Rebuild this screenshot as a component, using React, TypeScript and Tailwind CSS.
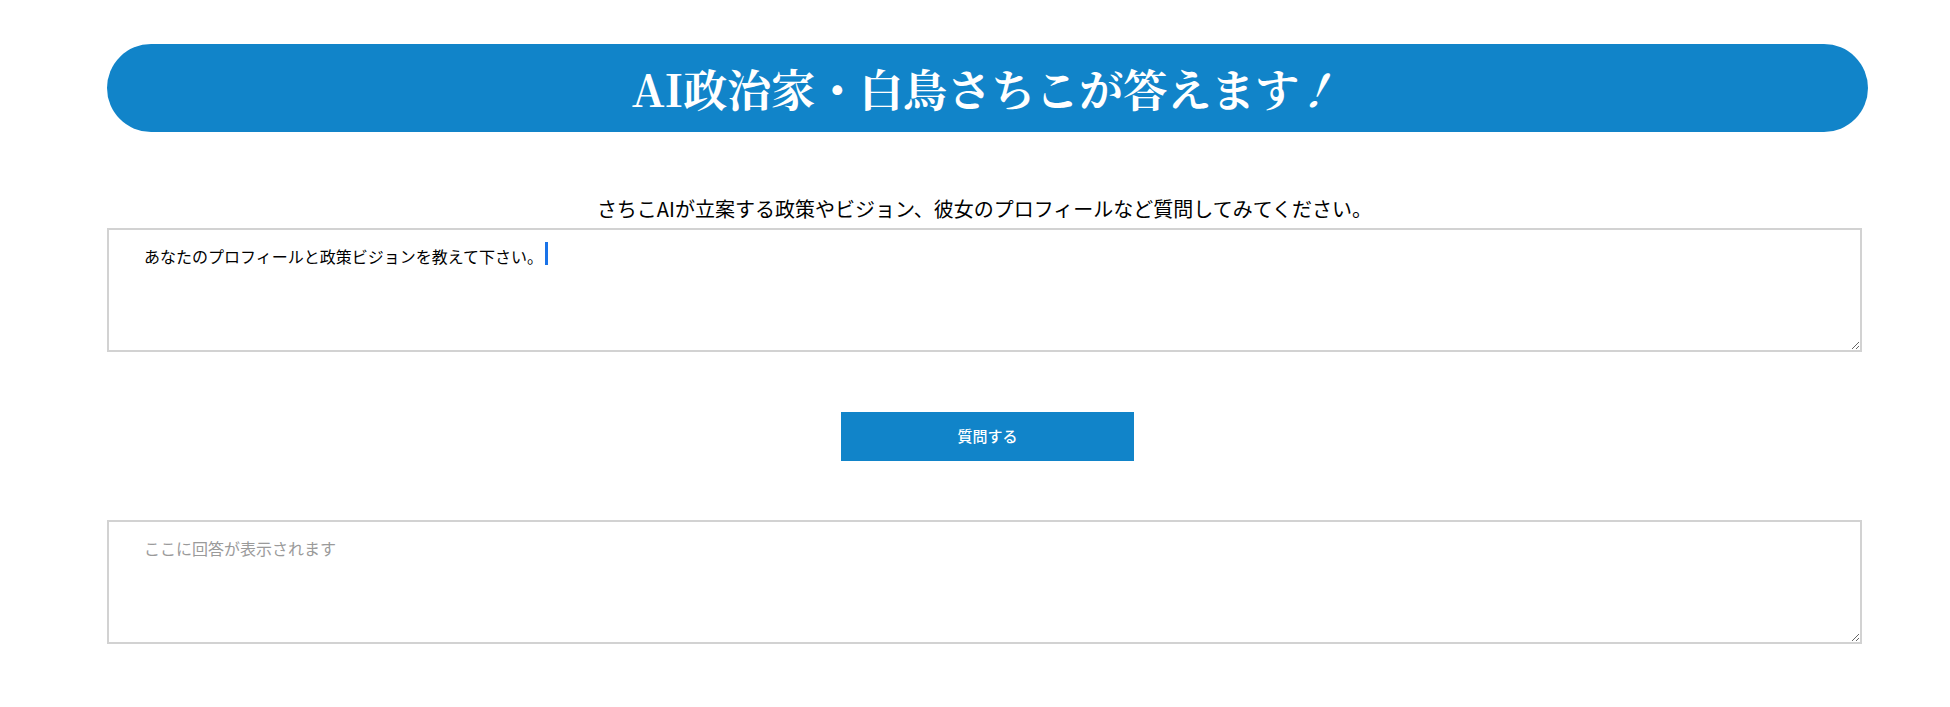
const App = () => {
  const jp = { fontFamily: '"Noto Sans CJK JP", "Noto Sans", sans-serif' };

  return (
    <div className="min-h-[707px] bg-white pl-[107px] pt-[44px]" style={jp}>
      <div className="flex h-[88px] w-[1761px] items-center justify-center rounded-full bg-[#1184c9]">
        <h1
          className="text-[44px] font-bold leading-none text-white"
          style={{ fontFamily: '"Noto Serif CJK JP", "Liberation Serif", "Noto Sans CJK JP", serif' }}
        >
          AI政治家・白鳥さちこが答えます<span className="inline-block -skew-x-[25deg]">！</span>
        </h1>
      </div>

      <div className="w-[1755px]">
        <p className="mt-[63px] text-center text-[20px] leading-[28px] text-black">
          さちこAIが立案する政策やビジョン、彼女のプロフィールなど質問してみてください。
        </p>

        <div className="relative mt-[5px]">
          <textarea
            defaultValue="あなたのプロフィールと政策ビジョンを教えて下さい。"
            className="block h-[124px] w-full border-2 border-[#d2d2d2] pt-[15px] pl-[35px] pr-4 text-[16px] leading-[22px] text-black outline-none"
          />
          <span className="absolute left-[438px] top-[14px] h-[23px] w-[3px] bg-[#1a73e8]" />
        </div>

        <div className="mt-[60px] flex justify-center pl-[6px]">
          <button className="h-[49px] w-[293px] bg-[#1184c9] text-[15px] font-medium text-white">
            質問する
          </button>
        </div>

        <textarea
          placeholder="ここに回答が表示されます"
          className="mt-[59px] block h-[124px] w-full border-2 border-[#d2d2d2] pt-[15px] pl-[35px] pr-4 text-[16px] leading-[22px] text-black outline-none placeholder:text-[#9a9a9a]"
        />
      </div>
    </div>
  );
};

export default App;
